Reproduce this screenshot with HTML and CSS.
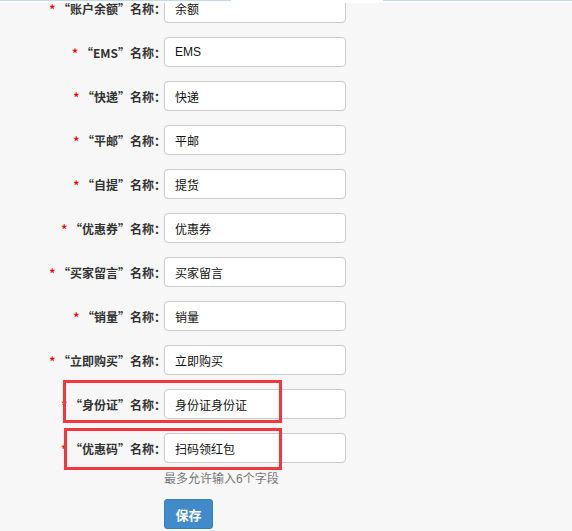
FILE: index.html
```html
<!DOCTYPE html>
<html lang="zh-CN">
<head>
    <meta charset="UTF-8">
    <meta name="viewport" content="width=device-width, initial-scale=1.0">
    <title>字段名称设置</title>
    <link rel="stylesheet" href="styles.css">
</head>
<body>
    <div class="top-edge">
        <span class="edge-line edge-left"></span>
        <span class="edge-line edge-right"></span>
    </div>

    <form class="name-form">
        <div class="form-row">
            <label class="row-label"><span class="req">*</span> “账户余额”名称：</label>
            <input class="row-input" type="text" value="余额">
        </div>
        <div class="form-row">
            <label class="row-label"><span class="req">*</span> “EMS”名称：</label>
            <input class="row-input" type="text" value="EMS">
        </div>
        <div class="form-row">
            <label class="row-label"><span class="req">*</span> “快递”名称：</label>
            <input class="row-input" type="text" value="快递">
        </div>
        <div class="form-row">
            <label class="row-label"><span class="req">*</span> “平邮”名称：</label>
            <input class="row-input" type="text" value="平邮">
        </div>
        <div class="form-row">
            <label class="row-label"><span class="req">*</span> “自提”名称：</label>
            <input class="row-input" type="text" value="提货">
        </div>
        <div class="form-row">
            <label class="row-label"><span class="req">*</span> “优惠券”名称：</label>
            <input class="row-input" type="text" value="优惠券">
        </div>
        <div class="form-row">
            <label class="row-label"><span class="req">*</span> “买家留言”名称：</label>
            <input class="row-input" type="text" value="买家留言">
        </div>
        <div class="form-row">
            <label class="row-label"><span class="req">*</span> “销量”名称：</label>
            <input class="row-input" type="text" value="销量">
        </div>
        <div class="form-row">
            <label class="row-label"><span class="req">*</span> “立即购买”名称：</label>
            <input class="row-input" type="text" value="立即购买">
        </div>
        <div class="form-row">
            <label class="row-label"><span class="req">*</span> “身份证”名称：</label>
            <input class="row-input" type="text" value="身份证身份证">
        </div>
        <div class="form-row last-row">
            <label class="row-label"><span class="req">*</span> “优惠码”名称：</label>
            <input class="row-input" type="text" value="扫码领红包">
        </div>
        <p class="help-text">最多允许输入6个字段</p>
        <div class="actions">
            <button type="button" class="btn-save">保存</button>
        </div>
    </form>

    <!-- 标注框 -->
    <div class="mark mark-one"></div>
    <div class="mark mark-two"></div>
</body>
</html>
```

FILE: styles.css
```css
/* 基础 */
body {
    margin: 0;
    background-color: #f7f7f7;
    font-family: "Liberation Sans", Arial, "Noto Sans CJK SC", sans-serif;
    font-size: 12px;
    color: #333;
    overflow: hidden;
    position: relative;
    height: 531px;
}

/* 顶部遮挡条 */
.top-edge {
    position: absolute;
    top: 0;
    left: 0;
    right: 0;
    height: 3px;
    background-color: #fff;
    z-index: 2;
}

.edge-line {
    position: absolute;
    top: 0;
    height: 1px;
    background-color: #c4d8ef;
}

.edge-left {
    left: 0;
    width: 231px;
}

.edge-right {
    left: 383px;
    right: 0;
}

/* 表单 */
.name-form {
    margin: -7px 0 0 0;
}

.form-row {
    display: flex;
    align-items: center;
    height: 30px;
    margin-bottom: 14px;
}

.form-row.last-row {
    margin-bottom: 0;
}

.row-label {
    flex: 0 0 166px;
    margin-right: -2px;
    box-sizing: border-box;
    text-align: right;
    font-family: "Noto Sans CJK SC", "Liberation Sans", sans-serif;
    font-weight: bold;
    color: #333;
    white-space: nowrap;
}

.req {
    color: #f00;
}

.row-input {
    flex: 0 0 182px;
    width: 182px;
    height: 30px;
    box-sizing: border-box;
    padding: 0 10px;
    border: 1px solid #ccc;
    border-radius: 4px;
    background-color: #fff;
    font-family: "Liberation Sans", Arial, "Noto Sans CJK SC", sans-serif;
    font-size: 12px;
    color: #111;
    outline: none;
    position: relative;
}

.help-text {
    margin: 8px 0 0 164px;
    line-height: 17px;
    color: #777;
}

.actions {
    margin: 11px 0 0 164px;
}

.btn-save {
    width: 49px;
    height: 30px;
    padding: 0;
    background-color: #428bca;
    border: 1px solid #3a7fbd;
    border-radius: 3px;
    color: #fff;
    font-family: "Liberation Sans", Arial, "Noto Sans CJK SC", sans-serif;
    font-size: 13px;
    font-weight: bold;
    cursor: pointer;
}

/* 红色标注框 */
.mark {
    position: absolute;
    border: 3px solid #f2383d;
    box-sizing: border-box;
}

.mark-one {
    left: 63px;
    top: 380px;
    width: 219px;
    height: 43px;
}

.mark-two {
    left: 64px;
    top: 428px;
    width: 218px;
    height: 42px;
}
```
